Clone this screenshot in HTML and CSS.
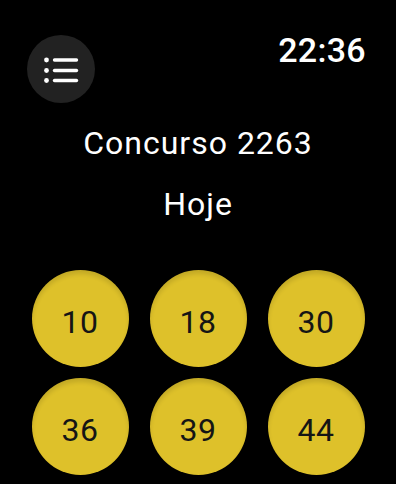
FILE: index.html
```
<!DOCTYPE html>
<html>
<head>
<meta charset="utf-8">
<link rel="stylesheet" href="styles.css">
</head>
<body>
<div class="screen">
  <div class="header">
    <div class="menu-btn">
      <svg width="68" height="68" viewBox="0 0 68 68">
        <circle cx="19.5" cy="25" r="2.4" fill="#fff"/>
        <circle cx="19.5" cy="35.5" r="2.4" fill="#fff"/>
        <circle cx="19.5" cy="45.5" r="2.4" fill="#fff"/>
        <line x1="27.5" y1="25" x2="49.5" y2="25" stroke="#fff" stroke-width="3.4" stroke-linecap="round"/>
        <line x1="27.5" y1="35.5" x2="49.5" y2="35.5" stroke="#fff" stroke-width="3.4" stroke-linecap="round"/>
        <line x1="27.5" y1="45.5" x2="49.5" y2="45.5" stroke="#fff" stroke-width="3.4" stroke-linecap="round"/>
      </svg>
    </div>
    <div class="time">22:36</div>
  </div>
  <div class="title">Concurso 2263</div>
  <div class="subtitle">Hoje</div>
  <div class="balls">
    <div class="ball">10</div>
    <div class="ball">18</div>
    <div class="ball">30</div>
    <div class="ball">36</div>
    <div class="ball">39</div>
    <div class="ball">44</div>
  </div>
</div>
</body>
</html>
```
FILE: styles.css
```
html, body {
  margin: 0;
  padding: 0;
  background: #000;
}
body {
  width: 396px;
  height: 484px;
  overflow: hidden;
  font-family: Roboto, "Liberation Sans", sans-serif;
  color: #fff;
}
.screen {
  display: flex;
  flex-direction: column;
}
.header {
  display: flex;
  justify-content: space-between;
  align-items: flex-start;
  padding: 35px 30px 0 27px;
}
.menu-btn {
  width: 68px;
  height: 68px;
  border-radius: 50%;
  background: #222222;
  display: flex;
}
.time {
  font-size: 34px;
  line-height: 34px;
  font-weight: 500;
  margin-top: -2.5px;
  letter-spacing: 0.3px;
}
.title {
  margin-top: 20px;
  text-align: center;
  font-size: 32px;
  line-height: 40px;
  letter-spacing: 1px;
}
.subtitle {
  margin-top: 21px;
  text-align: center;
  font-size: 32px;
  line-height: 40px;
  letter-spacing: 1px;
}
.balls {
  margin-top: 46px;
  display: grid;
  grid-template-columns: repeat(3, 97px);
  column-gap: 21px;
  row-gap: 11px;
  justify-content: center;
}
.ball {
  width: 97px;
  height: 97px;
  border-radius: 50%;
  background: #DEC12A;
  box-shadow: inset 0 4px 4px rgba(0, 0, 0, 0.12);
  display: flex;
  align-items: center;
  justify-content: center;
  box-sizing: border-box;
  padding-top: 6px;
  color: #151515;
  font-size: 32px;
  letter-spacing: 0.5px;
}
```
